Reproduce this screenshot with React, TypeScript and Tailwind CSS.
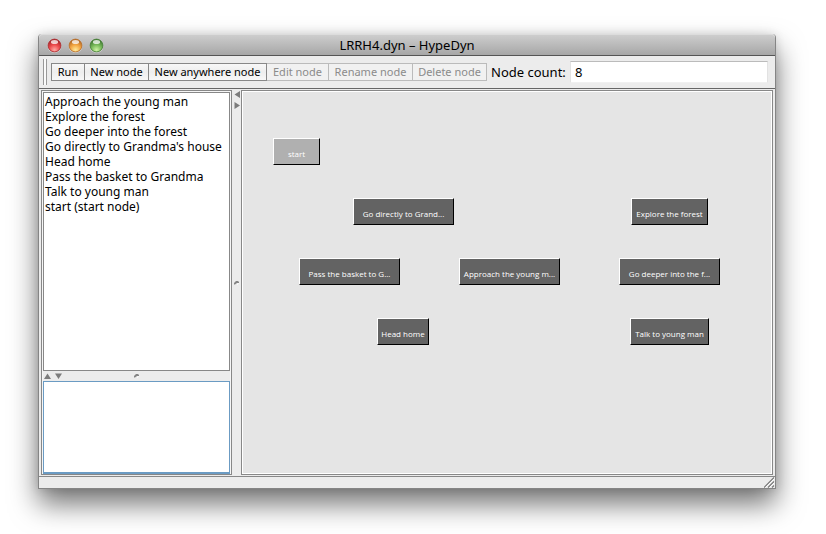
import React from "react";

type StoryNode = { label: string; box: string; start?: boolean };

const titles = [
  "Approach the young man",
  "Explore the forest",
  "Go deeper into the forest",
  "Go directly to Grandma's house",
  "Head home",
  "Pass the basket to Grandma",
  "Talk to young man",
  "start (start node)",
];

const nodes: StoryNode[] = [
  { label: "start", box: "left-[31px] top-[47px] w-[47px]", start: true },
  { label: "Go directly to Grand...", box: "left-[111px] top-[107px] w-[101px]" },
  { label: "Explore the forest", box: "left-[389px] top-[107px] w-[77px]" },
  { label: "Pass the basket to G...", box: "left-[57px] top-[167px] w-[101px]" },
  { label: "Approach the young m...", box: "left-[217px] top-[167px] w-[101px]" },
  { label: "Go deeper into the f...", box: "left-[377px] top-[167px] w-[101px]" },
  { label: "Head home", box: "left-[135px] top-[227px] w-[52px]" },
  { label: "Talk to young man", box: "left-[388px] top-[227px] w-[79px]" },
];

const tools = [
  { label: "Run", width: "w-[34px]", enabled: true },
  { label: "New node", width: "w-[65px]", enabled: true },
  { label: "New anywhere node", width: "w-[119px]", enabled: true },
  { label: "Edit node", width: "w-[63px]", enabled: false },
  { label: "Rename node", width: "w-[85px]", enabled: false },
  { label: "Delete node", width: "w-[75px]", enabled: false },
];

function Light({ label, id, dark, mid, glow }: { label: string; id: string; dark: string; mid: string; glow: string }) {
  return (
    <button aria-label={label} className="size-[15px]">
      <svg viewBox="0 0 15 15" className="size-[15px]">
        <defs>
          <radialGradient id={id} cx="0.5" cy="0.85" r="0.75">
            <stop offset="0" stopColor={glow} />
            <stop offset="0.55" stopColor={mid} />
            <stop offset="1" stopColor={dark} />
          </radialGradient>
        </defs>
        <circle cx="7.5" cy="8" r="6.9" fill="#e2e2e2" opacity="0.7" />
        <circle cx="7.5" cy="7.5" r="6.4" fill={`url(#${id})`} stroke={dark} strokeWidth="0.8" />
        <ellipse cx="7.5" cy="3.9" rx="3.6" ry="2" fill="#fff" opacity="0.75" />
      </svg>
    </button>
  );
}

function Grip() {
  return (
    <svg viewBox="0 0 5 4" className="h-1 w-[5px]">
      <path d="M0 3.5V2L2 0H4L5 1V2H3L1 3.5Z" fill="#858585" />
      <path d="M3 3.5L4.5 2.5" stroke="#fff" />
    </svg>
  );
}

export default function App() {
  return (
    <div className="flex h-screen bg-white pt-[34px] pr-[50px] pb-[45px] pl-[38px] font-['Noto_Sans','Open_Sans',sans-serif] text-black">
      <main className="flex min-w-0 flex-1 flex-col rounded-t-[4px] border-x border-b border-[#858585] bg-[#ececec] shadow-[0_15px_28px_0_rgba(0,0,0,0.55),0_0_10px_rgba(0,0,0,0.12)]">
        <header className="grid h-[22px] shrink-0 grid-cols-[1fr_auto_1fr] items-center rounded-t-[4px] border-t border-b border-t-[#dcdcdc] border-b-[#555] bg-linear-to-b from-[#cdcdcd] to-[#a7a7a7]">
          <div className="flex gap-[6px] pl-2">
            <Light label="Close" id="close" dark="#a8282c" mid="#ed4a4c" glow="#ffaaa5" />
            <Light label="Minimize" id="minimize" dark="#b56b26" mid="#f3a541" glow="#ffeb9b" />
            <Light label="Zoom" id="zoom" dark="#437c34" mid="#78b95a" glow="#cff5a5" />
          </div>
          <h1 className="text-[13px] leading-5">LRRH4.dyn – HypeDyn</h1>
        </header>

        <div className="flex h-[33px] shrink-0 items-center border-b border-[#666] pr-[7px] pl-1">
          <div className="mr-1 h-[26px] w-1 border-x border-[#999] bg-[#fafafa]" />
          {tools.map((t) => (
            <button
              key={t.label}
              disabled={!t.enabled}
              className={`${t.width} -mr-px h-[18px] shrink-0 border text-center text-[11px] leading-4 whitespace-nowrap ${
                t.enabled
                  ? "relative border-[#888] bg-linear-to-b from-[#f8f8f8] via-[#eee] to-[#f8f8f8] text-black"
                  : "border-[#bbb] bg-[#f1f1f1] text-[#8b8b8b]"
              }`}
            >
              {t.label}
            </button>
          ))}
          <label htmlFor="count" className="ml-1 w-[80px] shrink-0 pl-px text-[13px] leading-5 whitespace-nowrap">
            Node count:
          </label>
          <input
            id="count"
            readOnly
            defaultValue="8"
            className="h-[22px] min-w-0 flex-1 border border-t-[#bbb] border-r-[#e2e2e2] border-b-[#f0f0f0] border-l-[#e2e2e2] bg-white px-1 text-[13px] outline-none"
          />
        </div>

        <div className="flex min-h-0 flex-1 border-b border-[#888] bg-[#ececec] px-[2px] pt-px pb-px">
          <section className="flex w-[191px] shrink-0 flex-col border border-[#888] bg-[#f6f6f6] px-px pt-px">
            <ul className="min-h-0 flex-1 overflow-hidden border border-[#888] bg-white pt-px pl-px">
              {titles.map((t) => (
                <li key={t} className="text-[12px] leading-[15px] whitespace-nowrap">
                  {t}
                </li>
              ))}
            </ul>
            <div className="grid h-[10px] shrink-0 grid-cols-[1fr_auto_1fr] items-center bg-[#ececec]">
              <svg viewBox="0 0 20 6" className="h-[6px] w-5">
                <path d="M1 6L4.5 0.5L8 6ZM12 0.5H19L15.500 6Z" fill="#7c7c7c" />
              </svg>
              <Grip />
            </div>
            <textarea
              aria-label="Node text"
              className="block h-[93px] w-full shrink-0 resize-none border border-b-2 border-[#6b9bc3] bg-white outline-none"
            />
          </section>

          <div className="flex w-[9px] shrink-0 flex-col items-center pb-[18px]">
            <svg viewBox="0 0 6 18" className="mt-px h-[18px] w-[6px]">
              <path d="M6 0V7L0.500 3.500ZM0.500 11V18L6 14.500Z" fill="#7c7c7c" />
            </svg>
            <div className="flex min-h-0 flex-1 items-center">
              <Grip />
            </div>
          </div>

          <section className="relative min-w-0 flex-1 overflow-hidden border border-[#888] bg-[#e5e5e5] inset-ring inset-ring-white">
            {nodes.map((n) => (
              <button
                key={n.label}
                className={`${n.box} absolute flex h-[27px] justify-center border border-t-white border-r-black border-b-black border-l-white pt-[10px] font-['Open_Sans',sans-serif] text-[8px] leading-[10px] whitespace-nowrap text-white ${
                  n.start ? "bg-[#b0b0b0]" : "bg-[#636363]"
                }`}
              >
                {n.label}
              </button>
            ))}
          </section>
        </div>

        <footer className="flex h-[11px] shrink-0 items-center justify-end">
          <svg viewBox="0 0 11 11" className="size-[11px]">
            <path d="M0 10.500L10 0.500M4 10.500L10 4.500M8 10.500L10 8.500" stroke="#777" strokeWidth="1.100" />
            <path d="M1.500 10.500L10.500 1.500M5.500 10.500L10.500 5.500" stroke="#fff" strokeWidth="0.800" />
          </svg>
        </footer>
      </main>
    </div>
  );
}
